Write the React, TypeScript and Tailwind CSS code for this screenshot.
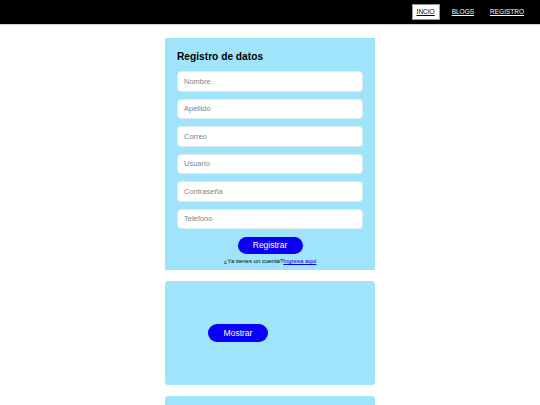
import React from 'react';

const fields = ['Nombre', 'Apellido', 'Correo', 'Usuario', 'Contraseña', 'Telefono'];

const App = () => {
  return (
    <div className="min-h-screen bg-white font-['Liberation_Sans',Arial,sans-serif]">
      <nav className="h-[25px] bg-black border-b border-[#d0d0d0] flex items-center justify-end pr-[12px] gap-[8px]">
        <a href="#" className="bg-white text-black underline text-[6.5px] leading-none px-[4px] py-[4px] border border-[#999]">
          INCIO
        </a>
        <a href="#" className="text-white underline text-[6.5px] leading-none px-[4px] py-[4px]">
          BLOGS
        </a>
        <a href="#" className="text-white underline text-[6.5px] leading-none px-[4px] py-[4px]">
          REGISTRO
        </a>
      </nav>

      <main className="w-[210px] mx-auto pt-[13px] flex flex-col gap-[11px]">
        <section className="bg-[#a0e4fc] px-[12px] pt-[12px] pb-[5px]">
          <h2 className="text-[10.2px] font-bold leading-[14px] text-black">Registro de datos</h2>
          <div className="mt-[7px] flex flex-col gap-[7px]">
            {fields.map((f) => (
              <input
                key={f}
                type="text"
                placeholder={f}
                className="h-[20.5px] w-full bg-white rounded-[4px] border border-[#dcebf0] px-[6px] text-[7.5px] text-black placeholder:text-[#858585] outline-none"
              />
            ))}
          </div>
          <div className="flex flex-col items-center mt-[8px]">
            <button className="w-[65px] h-[17px] rounded-full bg-[#0a00f5] text-white text-[8.5px] leading-none">
              Registrar
            </button>
            <p className="mt-[3px] text-[6px] leading-[8px] text-black">
              ¿Ya tienes un cuenta?<a href="#" className="text-[#0a00f5] underline">Ingresa aqui</a>
            </p>
          </div>
        </section>

        <section className="bg-[#a0e4fc] rounded-[3px] h-[104px] flex items-center pl-[43px]">
          <button className="w-[60px] h-[18px] rounded-full bg-[#0a00f5] text-white text-[8.5px] leading-none">
            Mostrar
          </button>
        </section>

        <section className="bg-[#a0e4fc] rounded-[3px] h-[104px]"></section>
      </main>
    </div>
  );
};

export default App;
